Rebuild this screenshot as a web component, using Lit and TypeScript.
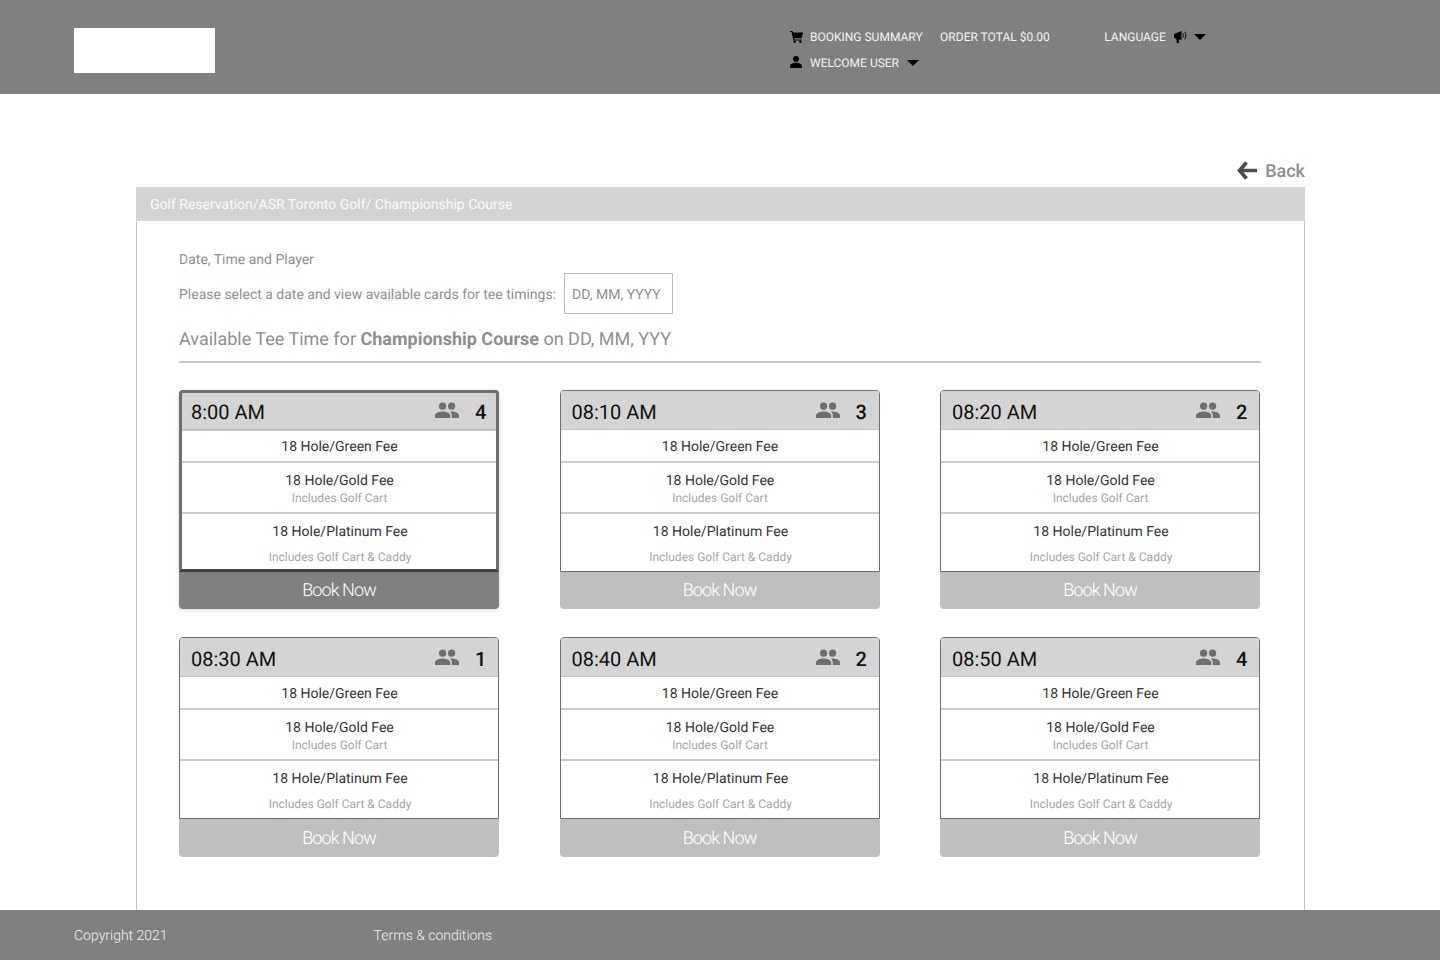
import { LitElement, html, css } from "lit";
import { customElement } from "lit/decorators.js";

const slots = [
  { time: "8:00 AM", n: 4, sel: true },
  { time: "08:10 AM", n: 3 },
  { time: "08:20 AM", n: 2 },
  { time: "08:30 AM", n: 1 },
  { time: "08:40 AM", n: 2 },
  { time: "08:50 AM", n: 4 },
];

const caret = html`<svg class="caret" width="12" height="6" viewBox="0 0 12 6"><path d="M0 0h12L6 6z" fill="#000"/></svg>`;
const people = html`<svg class="people" width="24" height="16" viewBox="0 0 24 16"><circle cx="7.6" cy="4.200" r="3.600" fill="#6e6e6e"/><circle cx="16.600" cy="4.200" r="3.600" fill="#6e6e6e"/><path d="M0 16v-2.600C0 10.600 4.600 9.400 7.600 9.400s7.600 1.200 7.600 4V16zM16.800 16v-2.600c0-1.600-.7-2.800-1.900-3.700.6-.2 1.300-.3 1.900-.3 2.900 0 7.200 1.200 7.200 4V16z" fill="#6e6e6e"/></svg>`;

@customElement("app-root")
export class AppRoot extends LitElement {
  static styles = css`
    :host { display: flex; flex-direction: column; height: 960px; overflow: hidden; font-family: Roboto, "Liberation Sans", sans-serif; background: #fff; text-rendering: geometricPrecision; }
    .top { height: 94px; flex: none; background: #808080; display: flex; }
    .logo { width: 141px; height: 45px; margin: 28px 0 0 74px; background: #fff; flex: none; }
    .nav { margin-left: 574px; padding-top: 27px; display: flex; flex-direction: column; gap: 6px; color: #f2f2f2; font-size: 12px; }
    .nav-row { display: flex; align-items: center; height: 20px; white-space: nowrap; }
    .ico { width: 13px; margin-left: 1px; margin-right: 7px; display: flex; justify-content: flex-start; flex: none; }
    .user { margin-top: -2px; }
    .order { margin-left: 17.5px; }
    .lang { margin-left: 54.5px; }
    .horn { margin-left: 8px; margin-top: -1px; }
    .caret { margin-left: 8px; }
    .lang-caret { margin-left: 7px; }
    .main { flex: 1; min-height: 0; display: flex; flex-direction: column; padding: 57px 135px 0 136px; }
    .back { height: 36px; flex: none; display: flex; justify-content: flex-end; align-items: flex-start; gap: 8px; color: #8f8f8f; font-size: 18px; font-weight: 500; line-height: 42px; }
    .back svg { margin-top: 9px; }
    .panel { flex: 1; border: solid #c4c4c4; border-width: 0 1px; display: flex; flex-direction: column; min-height: 0; }
    .crumb { height: 34px; flex: none; margin: 0 -1px; padding-left: 14px; background: #d4d4d4; color: #fafafa; font-size: 14px; line-height: 36px; }
    .body { padding: 0 43px 0 42px; color: #8f8f8f; }
    .step { font-size: 14px; line-height: 20px; margin-top: 29px; }
    .pick { display: flex; align-items: center; font-size: 14px; margin-top: 3px; }
    .pick-label { padding-top: 2px; }
    .date { width: 109px; height: 41px; box-sizing: border-box; margin-left: 8px; padding-left: 7px; border: 1px solid #bdbdbd; line-height: 41px; padding-top: 1px; }
    .avail { font-size: 18px; line-height: 24px; margin-top: 14px; padding-bottom: 9px; border-bottom: 2px solid #c8c8c8; }
    .grid { display: grid; grid-template-columns: repeat(3, 320px); column-gap: 60.5px; row-gap: 28px; margin-top: 27px; }
    .card { position: relative; height: 219.4px; border-radius: 4px; display: flex; flex-direction: column; }
    .box { height: 182px; flex: none; box-sizing: border-box; border: 1px solid #6f6f6f; border-radius: 4px 4px 0 0; display: flex; flex-direction: column; overflow: hidden; background: #fff; }
    .head { height: 38px; flex: none; background: #d4d4d4; border-bottom: 1px solid #c4c4c4; display: flex; align-items: center; padding: 0 12px 0 11px; color: #111; font-size: 20px; }
    .time { flex: 1; padding-top: 3px; }
    .head .num { width: 11px; margin-left: 16px; text-align: center; font-weight: 500; font-size: 20px; color: #111; padding-top: 3px; }
    .people { flex: none; }
    .row { text-align: center; color: #333; font-size: 14px; border-bottom: 2px solid #ccc; flex: none; padding-left: 1px; }
    .r1 { height: 30px; padding-top: 1px; line-height: 33px; }
    .r2 { padding-top: 9px; height: 40px; line-height: 18px; }
    .r3 { border-bottom: 0; flex: 1; padding-top: 9px; line-height: 18px; padding-left: 2px; }
    .sub { color: #a6a6a6; font-size: 12px; line-height: 16px; }
    .r3 .sub { margin-top: 8px; }
    .btn { flex: 1; background: #bfbfbf; color: #fff; border-radius: 0 0 4px 4px; display: flex; align-items: center; justify-content: center; font-size: 18px; font-weight: 300; letter-spacing: -0.9px; }
    .sel { box-shadow: 0 1px 4px rgba(0,0,0,.16); }
    .sel::after { content: ""; position: absolute; left: 0; top: 0; width: 320px; height: 182px; box-sizing: border-box; border: 3px solid #6f6f6f; border-bottom-color: #404040; border-radius: 4px 4px 0 0; pointer-events: none; }
    .sel .head { box-shadow: 0 1px 0 #c4c4c4; }
    .sel .btn { background: #808080; }
    .foot { height: 50px; flex: none; box-sizing: border-box; padding: 2px 0 0 74px; background: #808080; color: #f2f2f2; font-size: 14px; font-weight: 300; display: flex; align-items: center; }
    .terms { margin-left: 206px; }
  `;

  render() {
    return html`
      <div class="top">
        <div class="logo"></div>
        <div class="nav">
          <div class="nav-row">
            <span class="ico"><svg width="13" height="12" viewBox="0 0 13 12"><path d="M0 0h2.400l.5 1.600H13l-1.400 5.600H4.200l.3 1.200h7.200v1.100H3.400L1.500 1.100H0z" fill="#000"/><circle cx="4.600" cy="10.800" r="1.200" fill="#000"/><circle cx="10.400" cy="10.800" r="1.200" fill="#000"/></svg></span>
            <span>BOOKING SUMMARY</span>
            <span class="order">ORDER TOTAL $0.00</span>
            <span class="lang">LANGUAGE</span>
            <svg class="horn" width="13" height="13" viewBox="0 0 13 13"><path d="M0 4 7.500 1v9L4.800 9.200 5.200 13H2.800L2.200 8.600 0 8z" fill="#000"/><path d="M8.700 3.200c.9 1.500.9 3.100 0 4.600M10.700 1.800c1.500 2.400 1.500 5 0 7.400" stroke="#000" stroke-width="1" fill="none"/></svg>
            <svg class="caret lang-caret" width="12" height="6" viewBox="0 0 12 6"><path d="M0 0h12L6 6z" fill="#000"/></svg>
          </div>
          <div class="nav-row">
            <span class="ico"><svg class="user" width="12" height="12" viewBox="0 0 13 13"><circle cx="6.500" cy="3.300" r="3.200" fill="#000"/><path d="M0 13v-2c0-2.400 3.800-3.600 6.500-3.600S13 8.600 13 11v2z" fill="#000"/></svg></span>
            <span>WELCOME USER</span>
            ${caret}
          </div>
        </div>
      </div>
      <div class="main">
        <div class="back">
          <svg width="21" height="20" viewBox="0 0 21 20"><path d="M10.500 2.500 3.500 10.500l7 8M4 10.500h17" fill="none" stroke="#4d4d4d" stroke-width="3.600"/></svg>
          <span>Back</span>
        </div>
        <div class="panel">
          <div class="crumb">Golf Reservation/ASR Toronto Golf/ Championship Course</div>
          <div class="body">
            <div class="step">Date, Time and Player</div>
            <div class="pick"><span class="pick-label">Please select a date and view available cards for tee timings:</span><div class="date">DD, MM, YYYY</div></div>
            <div class="avail">Available Tee Time for <b>Championship Course</b> on DD, MM, YYY</div>
            <div class="grid">
              ${slots.map(
                (s) => html`
                  <div class="card ${s.sel ? "sel" : ""}">
                    <div class="box">
                      <div class="head"><span class="time">${s.time}</span>${people}<span class="num">${s.n}</span></div>
                      <div class="row r1">18 Hole/Green Fee</div>
                      <div class="row r2">18 Hole/Gold Fee<div class="sub">Includes Golf Cart</div></div>
                      <div class="row r3">18 Hole/Platinum Fee<div class="sub">Includes Golf Cart &amp; Caddy</div></div>
                    </div>
                    <div class="btn">Book Now</div>
                  </div>
                `
              )}
            </div>
          </div>
        </div>
      </div>
      <div class="foot"><span>Copyright 2021</span><span class="terms">Terms &amp; conditions</span></div>
    `;
  }
}
